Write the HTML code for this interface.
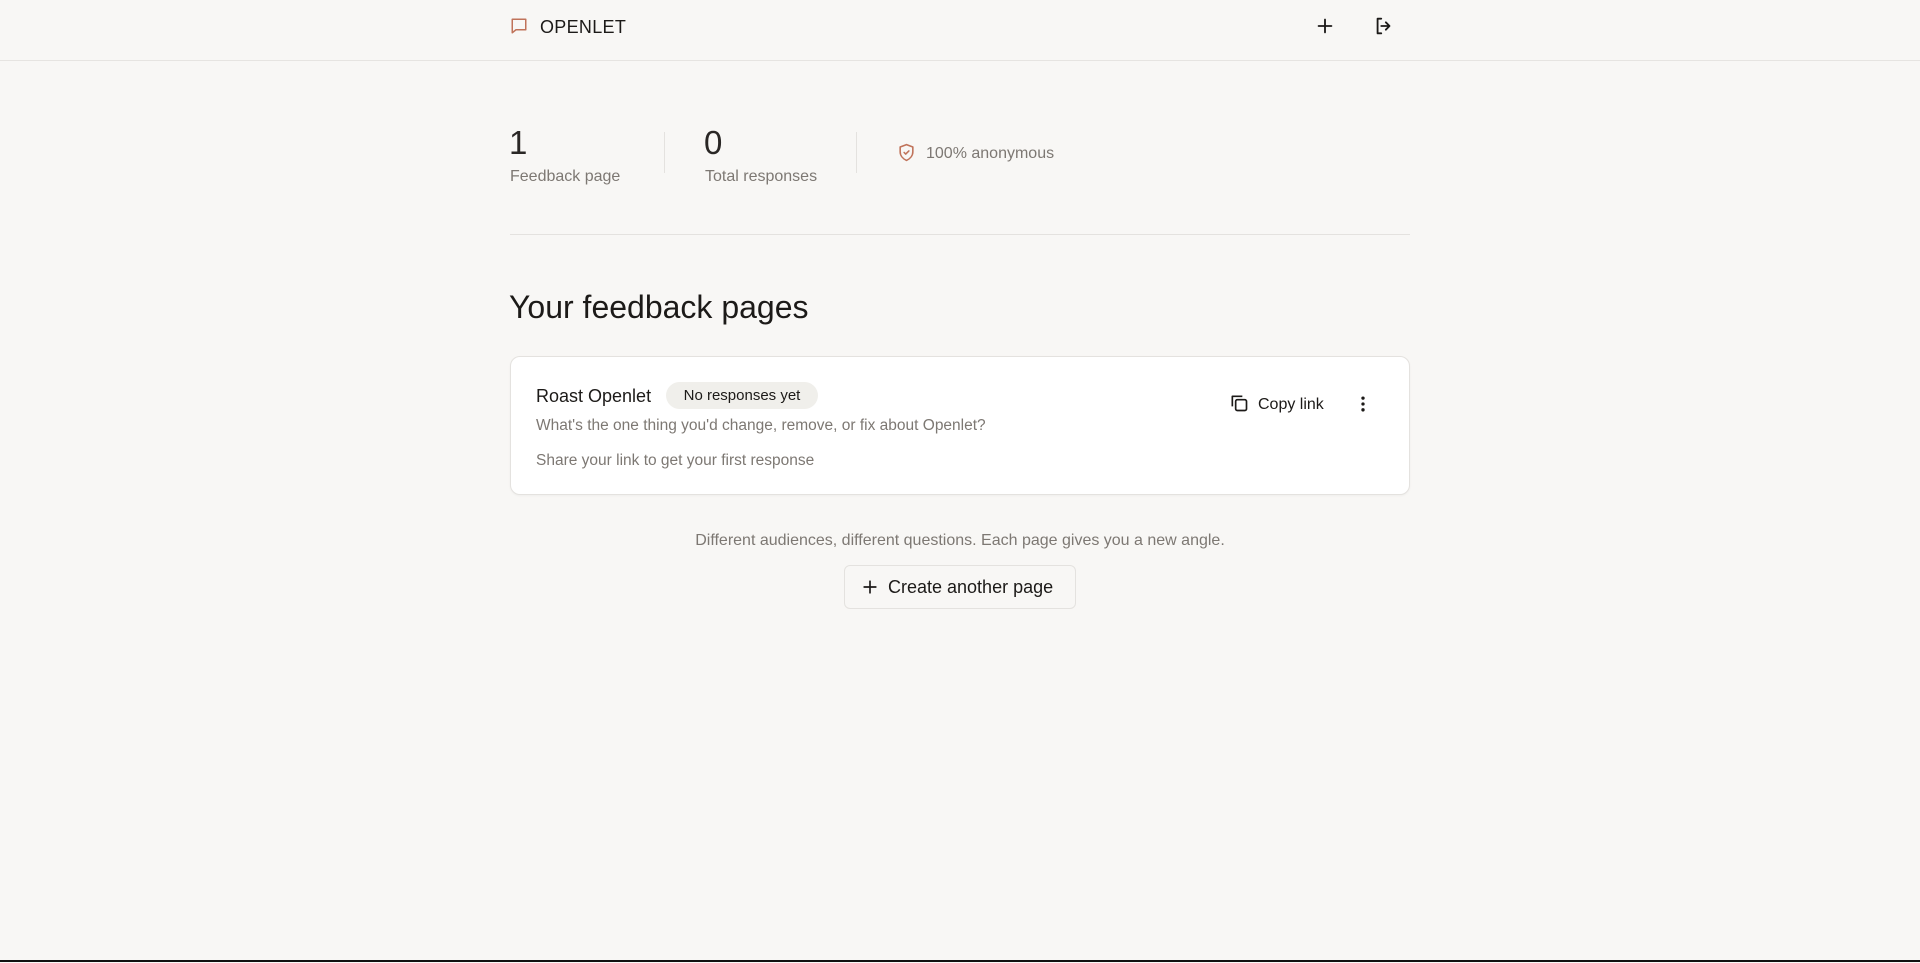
<!DOCTYPE html>
<html><head><meta charset="utf-8"><style>
*{box-sizing:border-box;margin:0;padding:0}
body{width:1920px;height:963px;background:#f8f7f5;font-family:"Liberation Sans",sans-serif;color:#1c1a18;position:relative;overflow:hidden}
.hdr{position:absolute;left:0;top:0;width:1920px;height:61px;border-bottom:1px solid #e6e4e1}
.abs{position:absolute;white-space:nowrap}
.muted{color:#7d7873}
</style></head><body>
<div class="hdr"></div>
<svg class="abs" style="left:510px;top:17px" width="18" height="18" viewBox="0 0 24 24" fill="none" stroke="#c0735a" stroke-width="2" stroke-linejoin="round"><path d="M3 3h18v14H8l-5 4z"/></svg>
<div class="abs" style="left:540px;top:17px;font-size:18px;letter-spacing:0.3px">OPENLET</div>
<svg class="abs" style="left:1314px;top:15px" width="22" height="22" viewBox="0 0 24 24" fill="none" stroke="#1c1a18" stroke-width="2" stroke-linecap="round"><path d="M12 5v14M5 12h14"/></svg>
<svg class="abs" style="left:1373px;top:15px" width="22" height="22" viewBox="0 0 24 24" fill="none" stroke="#1c1a18" stroke-width="2" stroke-linecap="round" stroke-linejoin="round"><path d="M9 4H5v16h4M14 8l4 4-4 4M18 12H9"/></svg>

<div class="abs" style="left:509px;top:124px;font-size:33px;color:#2a2725">1</div>
<div class="abs muted" style="left:510px;top:168px;font-size:16px">Feedback page</div>
<div class="abs" style="left:664px;top:132px;width:1px;height:41px;background:#e4e2df"></div>
<div class="abs" style="left:704px;top:124px;font-size:33px;color:#2a2725">0</div>
<div class="abs muted" style="left:705px;top:168px;font-size:16px">Total responses</div>
<div class="abs" style="left:856px;top:132px;width:1px;height:41px;background:#e4e2df"></div>
<svg class="abs" style="left:897px;top:143px" width="19" height="19" viewBox="0 0 24 24" fill="none" stroke="#c0735a" stroke-width="2" stroke-linecap="round" stroke-linejoin="round"><path d="M12 2l8 3v6c0 5-3.5 9-8 11-4.5-2-8-6-8-11V5z"/><path d="M9 12l2 2 4-4"/></svg>
<div class="abs muted" style="left:926px;top:145px;font-size:16px">100% anonymous</div>
<div class="abs" style="left:510px;top:234px;width:900px;height:1px;background:#e4e2df"></div>

<div class="abs" style="left:509px;top:289px;font-size:32px">Your feedback pages</div>

<div class="abs" style="left:510px;top:356px;width:900px;height:139px;background:#fff;border:1px solid #e4e2df;border-radius:10px;box-shadow:0 1px 2px rgba(0,0,0,.04)"></div>
<div class="abs" style="left:536px;top:386px;font-size:18px">Roast Openlet</div>
<div class="abs" style="left:666px;top:382px;width:152px;height:27px;border-radius:14px;background:#f0efeb;font-size:15px;line-height:28px;text-align:center">No responses yet</div>
<div class="abs muted" style="left:536px;top:417px;font-size:15.5px">What's the one thing you'd change, remove, or fix about Openlet?</div>
<div class="abs muted" style="left:536px;top:452px;font-size:15.5px">Share your link to get your first response</div>
<svg class="abs" style="left:1229px;top:393px" width="20" height="20" viewBox="0 0 24 24" fill="none" stroke="#1c1a18" stroke-width="2" stroke-linejoin="round"><rect x="8" y="8" width="13" height="13" rx="2"/><path d="M4 16V4h12"/></svg>
<div class="abs" style="left:1258px;top:396px;font-size:16px">Copy link</div>
<svg class="abs" style="left:1353px;top:394px" width="20" height="20" viewBox="0 0 24 24" fill="#1c1a18"><circle cx="12" cy="5" r="2"/><circle cx="12" cy="12" r="2"/><circle cx="12" cy="19" r="2"/></svg>

<div class="abs muted" style="left:0;width:1920px;text-align:center;top:532px;font-size:16px">Different audiences, different questions. Each page gives you a new angle.</div>
<div class="abs" style="left:844px;top:565px;width:232px;height:44px;border:1px solid #e4e2df;border-radius:6px;background:#f8f7f5"></div>
<svg class="abs" style="left:860px;top:577px" width="20" height="20" viewBox="0 0 24 24" fill="none" stroke="#1c1a18" stroke-width="2" stroke-linecap="round"><path d="M12 5v14M5 12h14"/></svg>
<div class="abs" style="left:888px;top:577px;font-size:18px">Create another page</div>

<div class="abs" style="left:0;top:960px;width:1920px;height:2px;background:#111"></div>
</body></html>
